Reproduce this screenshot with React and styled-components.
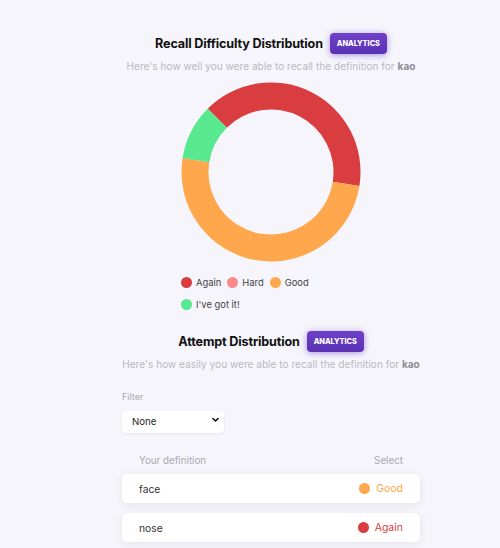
import React from "react";
import styled, { createGlobalStyle } from "styled-components";

const Global = createGlobalStyle`
  html, body { margin: 0; padding: 0; background: #f6f5fb; }
  body { font-family: Inter, "Noto Sans", sans-serif; color: #222; }
  * { box-sizing: border-box; }
`;

const Page = styled.div`
  min-height: 548px;
  padding: 33px 0 0 42px;
  display: flex;
  justify-content: center;
`;

const Column = styled.div`
  width: 298px;
  display: flex;
  flex-direction: column;
  align-items: center;
`;

const HeaderRow = styled.div`
  display: flex;
  align-items: center;
  gap: 7px;
  height: 21px;
  margin-top: ${(p) => p.$mt || 0}px;
`;

const Title = styled.h2`
  margin: 0;
  font-size: 12.6px;
  font-weight: 700;
  letter-spacing: -0.15px;
  color: #111;
`;

const Badge = styled.span`
  height: 21px;
  padding: 0 7px;
  display: inline-flex;
  align-items: center;
  border-radius: 4px;
  background: linear-gradient(180deg, #6d41c9 0%, #5a31b3 100%);
  box-shadow: 0 1px 6px rgba(106, 60, 200, 0.55);
  color: #fff;
  font-size: 7.4px;
  font-weight: 800;
  letter-spacing: -0.05px;
`;

const Subtitle = styled.p`
  margin: 6px 0 0;
  font-size: 10px;
  color: #b9b9c0;
  white-space: nowrap;
  letter-spacing: 0.05px;
  b { color: #8e8e96; font-weight: 700; }
`;

const ChartWrap = styled.div`
  margin-top: 10px;
  width: 180px;
  height: 180px;
`;

const Legend = styled.div`
  width: 180px;
  margin-top: 9px;
  display: flex;
  flex-wrap: wrap;
  column-gap: 6px;
`;

const LegendItem = styled.div`
  display: flex;
  align-items: center;
  gap: 4px;
  height: 22px;
  font-size: 9.4px;
  color: #444;
`;

const Dot = styled.span`
  width: 11px;
  height: 11px;
  border-radius: 50%;
  background: ${(p) => p.$c};
  flex: none;
`;

const FilterBlock = styled.div`
  align-self: stretch;
  margin-top: 21px;
  display: flex;
  flex-direction: column;
  gap: 7px;
`;

const Label = styled.span`
  font-size: 9px;
  color: #a9a9b0;
`;

const SelectBox = styled.div`
  position: relative;
  width: 102px;
  height: 22px;
`;

const Select = styled.select`
  appearance: none;
  width: 100%;
  height: 100%;
  border: none;
  border-radius: 4px;
  background: #fff;
  box-shadow: 0 1px 3px rgba(0, 0, 0, 0.06);
  padding: 0 0 0 10px;
  font-family: inherit;
  font-size: 9.6px;
  color: #222;
`;

const Chevron = styled.svg`
  position: absolute;
  right: 5px;
  top: 8px;
  pointer-events: none;
`;

const TableHead = styled.div`
  align-self: stretch;
  display: flex;
  justify-content: space-between;
  padding: 0 17px;
  margin-top: 24px;
  font-size: 9.8px;
  color: #a9a9b0;
`;

const Rows = styled.div`
  align-self: stretch;
  margin-top: 8px;
  display: flex;
  flex-direction: column;
  gap: 10px;
`;

const Row = styled.div`
  height: 29px;
  border-radius: 5px;
  background: #fff;
  box-shadow: 0 2px 8px rgba(40, 40, 80, 0.08);
  display: flex;
  align-items: center;
  justify-content: space-between;
  padding: 0 17px;
  font-size: 10.3px;
  color: #333;
`;

const Rating = styled.span`
  display: flex;
  align-items: center;
  gap: 6px;
  color: ${(p) => p.$c};
  font-size: 10.5px;
`;

const COLORS = {
  again: "#d93d3f",
  hard: "#fb8a8c",
  good: "#ffa74c",
  got: "#58e890",
};

function arcPath(cx, cy, R, r, a0, a1) {
  const rad = (a) => ((a - 90) * Math.PI) / 180;
  const p = (rr, a) => [cx + rr * Math.cos(rad(a)), cy + rr * Math.sin(rad(a))];
  const large = a1 - a0 > 180 ? 1 : 0;
  const [x0, y0] = p(R, a0);
  const [x1, y1] = p(R, a1);
  const [x2, y2] = p(r, a1);
  const [x3, y3] = p(r, a0);
  return `M${x0} ${y0} A${R} ${R} 0 ${large} 1 ${x1} ${y1} L${x2} ${y2} A${r} ${r} 0 ${large} 0 ${x3} ${y3} Z`;
}

function Donut() {
  const data = [
    { v: 4, c: COLORS.again },
    { v: 0, c: COLORS.hard },
    { v: 5, c: COLORS.good },
    { v: 1, c: COLORS.got },
  ];
  const total = data.reduce((s, d) => s + d.v, 0);
  let a = -45;
  return (
    <svg width="180" height="180" viewBox="0 0 180 180">
      {data.map((d, i) => {
        const a0 = a;
        const a1 = a + (d.v / total) * 360;
        a = a1;
        if (!d.v) return null;
        return <path key={i} d={arcPath(90, 90, 89.5, 62.5, a0, a1)} fill={d.c} />;
      })}
    </svg>
  );
}

export default function App() {
  return (
    <>
      <Global />
      <Page>
        <Column>
          <HeaderRow>
            <Title>Recall Difficulty Distribution</Title>
            <Badge>ANALYTICS</Badge>
          </HeaderRow>
          <Subtitle>
            Here's how well you were able to recall the definition for <b>kao</b>
          </Subtitle>
          <ChartWrap>
            <Donut />
          </ChartWrap>
          <Legend>
            <LegendItem><Dot $c={COLORS.again} />Again</LegendItem>
            <LegendItem><Dot $c={COLORS.hard} />Hard</LegendItem>
            <LegendItem><Dot $c={COLORS.good} />Good</LegendItem>
            <LegendItem><Dot $c={COLORS.got} />I've got it!</LegendItem>
          </Legend>

          <HeaderRow $mt={16}>
            <Title>Attempt Distribution</Title>
            <Badge>ANALYTICS</Badge>
          </HeaderRow>
          <Subtitle>
            Here's how easily you were able to recall the definition for <b>kao</b>
          </Subtitle>

          <FilterBlock>
            <Label>Filter</Label>
            <SelectBox>
              <Select defaultValue="none">
                <option value="none">None</option>
              </Select>
              <Chevron width="7" height="6" viewBox="0 0 7 6">
                <path d="M1 1.5 L3.5 4 L6 1.5" fill="none" stroke="#111" strokeWidth="1.6" strokeLinecap="round" strokeLinejoin="round" />
              </Chevron>
            </SelectBox>
          </FilterBlock>

          <TableHead>
            <span>Your definition</span>
            <span>Select</span>
          </TableHead>
          <Rows>
            <Row>
              <span>face</span>
              <Rating $c={COLORS.good}><Dot $c={COLORS.good} />Good</Rating>
            </Row>
            <Row>
              <span>nose</span>
              <Rating $c={COLORS.again}><Dot $c={COLORS.again} />Again</Rating>
            </Row>
          </Rows>
        </Column>
      </Page>
    </>
  );
}
